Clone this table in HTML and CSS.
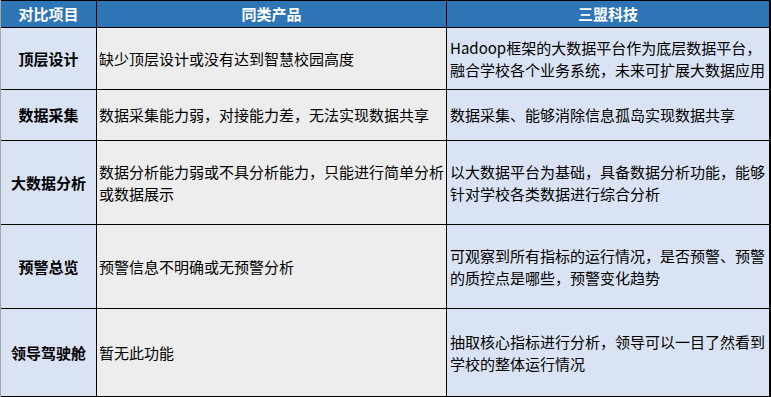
FILE: index.html
```html
<!DOCTYPE html>
<html lang="zh-CN">
<head>
    <meta charset="UTF-8">
    <meta name="viewport" content="width=device-width, initial-scale=1.0">
    <title>对比项目</title>
    <link rel="stylesheet" href="styles.css">
</head>
<body>
    <div class="compare">
        <div class="cell head">对比项目</div>
        <div class="cell head">同类产品</div>
        <div class="cell head">三盟科技</div>

        <div class="cell item">顶层设计</div>
        <div class="cell other">缺少顶层设计或没有达到智慧校园高度</div>
        <div class="cell ours">Hadoop框架的大数据平台作为底层数据平台，<br>融合学校各个业务系统，未来可扩展大数据应用</div>

        <div class="cell item">数据采集</div>
        <div class="cell other">数据采集能力弱，对接能力差，无法实现数据共享</div>
        <div class="cell ours">数据采集、能够消除信息孤岛实现数据共享</div>

        <div class="cell item">大数据分析</div>
        <div class="cell other">数据分析能力弱或不具分析能力，只能进行简单分析<br>或数据展示</div>
        <div class="cell ours">以大数据平台为基础，具备数据分析功能，能够<br>针对学校各类数据进行综合分析</div>

        <div class="cell item">预警总览</div>
        <div class="cell other">预警信息不明确或无预警分析</div>
        <div class="cell ours">可观察到所有指标的运行情况，是否预警、预警<br>的质控点是哪些，预警变化趋势</div>

        <div class="cell item">领导驾驶舱</div>
        <div class="cell other">暂无此功能</div>
        <div class="cell ours">抽取核心指标进行分析，领导可以一目了然看到<br>学校的整体运行情况</div>
    </div>
</body>
</html>
```

FILE: styles.css
```css
body {
    margin: 0;
    background: #fff;
    font-family: "Noto Sans CJK SC", "Microsoft YaHei", sans-serif;
    font-size: 15px;
    color: #000;
}

.compare {
    width: 769px;
    display: grid;
    grid-template-columns: 95px 349px 322px;
    grid-template-rows: 26px 61px 50px 83px 83px 87px;
    gap: 1px;
    padding: 1px 1px 1px 0;
    border-left: 1px solid #a6a6a6;
    background: #000;
}

.cell {
    display: flex;
    align-items: center;
    line-height: 22px;
    white-space: nowrap;
}

.head {
    justify-content: center;
    background: #2e75b6;
    color: #fff;
    font-weight: bold;
}

.item {
    justify-content: center;
    background: #dae3f3;
    font-weight: bold;
}

.other {
    padding-left: 2px;
    background: #ededed;
}

.ours {
    padding-left: 3px;
    background: #dae3f3;
}
```
